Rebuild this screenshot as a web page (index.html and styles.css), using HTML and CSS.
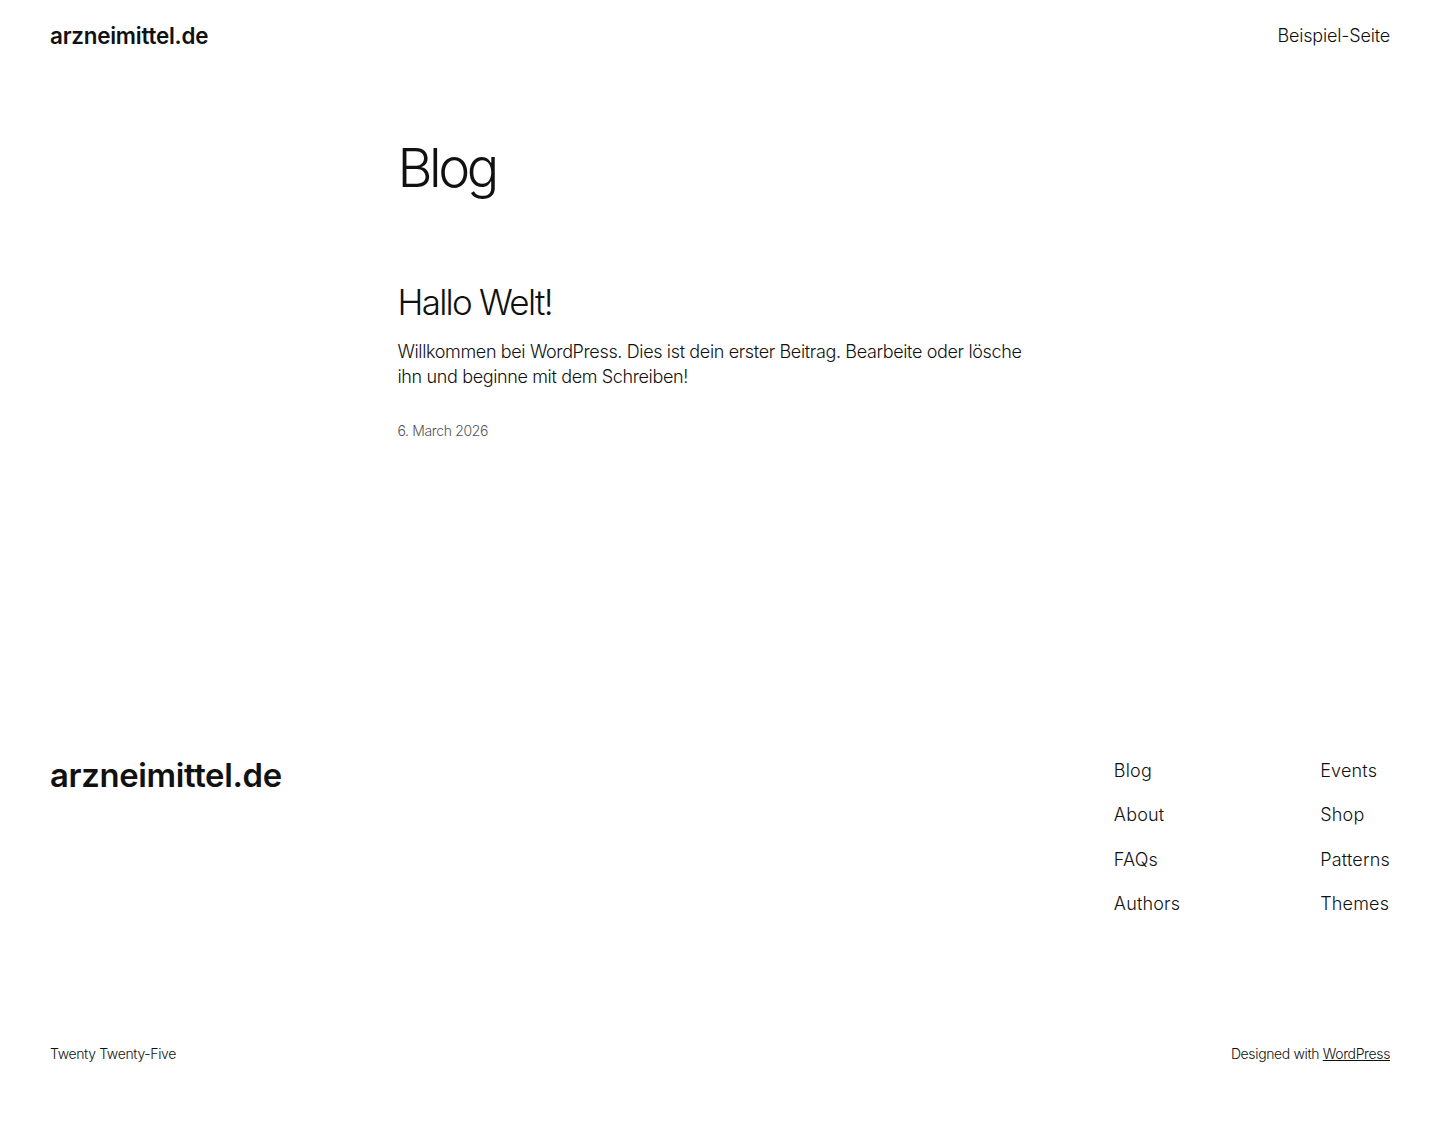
FILE: index.html
```html
<!DOCTYPE html>
<html lang="de">
<head>
<meta charset="utf-8">
<title>Blog – arzneimittel.de</title>
<link rel="stylesheet" href="styles.css">
</head>
<body>
<header class="site-header">
  <a class="site-title" href="#">arzneimittel.de</a>
  <nav class="header-nav"><a href="#">Beispiel-Seite</a></nav>
</header>
<main class="main">
  <h1 class="page-title">Blog</h1>
  <article class="post">
    <h2 class="post-title">Hallo Welt!</h2>
    <p class="post-excerpt">Willkommen bei WordPress. Dies ist dein erster Beitrag. Bearbeite oder lösche ihn und beginne mit dem Schreiben!</p>
    <div class="post-date">6. March 2026</div>
  </article>
</main>
<footer class="site-footer">
  <div class="footer-top">
    <a class="footer-title" href="#">arzneimittel.de</a>
    <div class="footer-navs">
      <ul class="footer-nav">
        <li><a href="#">Blog</a></li>
        <li><a href="#">About</a></li>
        <li><a href="#">FAQs</a></li>
        <li><a href="#">Authors</a></li>
      </ul>
      <ul class="footer-nav">
        <li><a href="#">Events</a></li>
        <li><a href="#">Shop</a></li>
        <li><a href="#">Patterns</a></li>
        <li><a href="#">Themes</a></li>
      </ul>
    </div>
  </div>
  <div class="footer-bottom">
    <span>Twenty Twenty-Five</span>
    <span>Designed with <a class="wp-link" href="#">WordPress</a></span>
  </div>
</footer>
</body>
</html>
```

FILE: styles.css
```css
* { box-sizing: border-box; }
html, body { margin: 0; padding: 0; }
body {
  font-family: Inter, "Noto Sans", sans-serif;
  font-weight: 300;
  color: #111111;
  background: #ffffff;
  font-size: 18px;
  letter-spacing: -0.02em;
}
a { color: inherit; text-decoration: none; }

.site-header {
  display: flex;
  justify-content: space-between;
  align-items: center;
  padding: 20px 50px;
  height: 70px;
}
.site-title {
  font-size: 22.4px;
  font-weight: 600;
  letter-spacing: -0.01em;
}
.header-nav a {
  font-size: 18px;
  font-weight: 300;
  letter-spacing: -0.01em;
}

.main {
  width: 645px;
  margin: 0 auto;
  padding-top: 66px;
  min-height: 612px;
}
.page-title {
  margin: 0;
  font-size: 54px;
  font-weight: 300;
  line-height: 1.2;
  letter-spacing: -0.065em;
}
.post { margin-top: 80px; }
.post-title {
  margin: 0;
  font-size: 35px;
  font-weight: 300;
  line-height: 1.2;
  letter-spacing: -0.05em;
}
.post-excerpt {
  margin: 16px 0 0;
  font-size: 18px;
  line-height: 25px;
}
.post-date {
  margin-top: 33px;
  font-size: 14px;
  color: #555;
}

.site-footer {
  padding: 74px 50px 0;
}
.footer-top {
  display: flex;
  justify-content: space-between;
  align-items: flex-start;
}
.footer-title {
  font-size: 32.8px;
  font-weight: 600;
  letter-spacing: -0.01em;
  line-height: 1.2;
}
.footer-navs {
  display: flex;
  gap: 140px;
  padding-top: 2px;
}
.footer-nav {
  list-style: none;
  margin: 0;
  padding: 0;
  display: flex;
  flex-direction: column;
  gap: 18.4px;
}
.footer-nav li {
  font-size: 18px;
  line-height: 26px;
  letter-spacing: 0.01em;
}
.footer-bottom {
  display: flex;
  justify-content: space-between;
  margin-top: 128px;
  font-size: 14px;
  padding-bottom: 50px;
}
.wp-link { text-decoration: underline; }
```
